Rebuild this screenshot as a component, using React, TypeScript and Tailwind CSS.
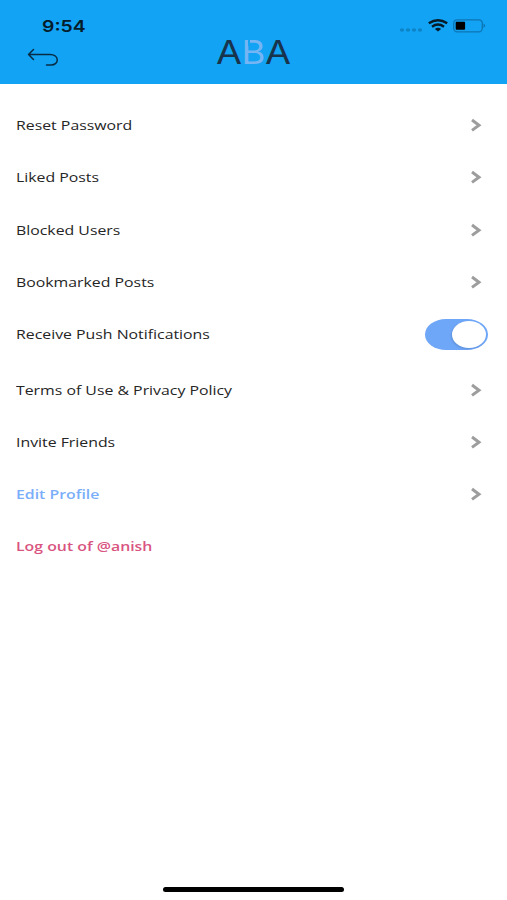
const rows = [
  { label: 'Reset Password', box: 'h-[52px]' },
  { label: 'Liked Posts', box: 'h-[52px]' },
  { label: 'Blocked Users', box: 'h-[53px]' },
  { label: 'Bookmarked Posts', box: 'h-[52px]' },
  { label: 'Receive Push Notifications', box: 'h-[52px] mb-1', toggle: true },
  { label: 'Terms of Use & Privacy Policy', box: 'h-[52px]' },
  { label: 'Invite Friends', box: 'h-[52px]' },
  { label: 'Edit Profile', box: 'h-[52px]', tone: 'text-[#7aaefa] font-semibold' },
  { label: 'Log out of @anish', box: 'h-[51px]', tone: 'text-[#d9547f] font-semibold', plain: true },
];

function Chevron() {
  return (
    <svg className="mr-[25px] mb-[2px] h-[14px] w-[12px]" viewBox="0 0 12 14" fill="none" stroke="#9d9d9d" strokeWidth="3">
      <path d="M2 2 9 7.2 2 12.4" />
    </svg>
  );
}

function Toggle() {
  return (
    <button aria-label="Receive Push Notifications" className="mr-[19px] mb-[2px] flex h-[31px] w-[63px] items-center justify-end rounded-[21px/15.5px] bg-[#6ea6f8] pr-[2px]">
      <span className="h-[27px] w-[34px] rounded-[50%] bg-white shadow-[-1px_1px_2px_rgba(0,0,0,0.12)]" />
    </button>
  );
}

export default function App() {
  return (
    <main className="flex h-[900px] w-[507px] flex-col bg-white font-['Open_Sans',sans-serif]">
      <header className="h-[84px] bg-[#12a3f5]">
        <div className="flex h-[38px] items-start justify-between pl-[42px] pr-[20px]">
          <span className="mt-[16px] origin-left scale-x-[1.21] font-['Inter',sans-serif] text-[16px] leading-5 font-semibold text-[#061c2b]">9:54</span>
          <svg className="mt-[18px] h-[16px] w-[88px]" viewBox="0 0 88 16" fill="none">
            <g fill="#0d82c4">
              <ellipse cx="3" cy="12" rx="2.1" ry="1.7" />
              <ellipse cx="9" cy="12" rx="2.1" ry="1.7" />
              <ellipse cx="15" cy="12" rx="2.1" ry="1.7" />
              <ellipse cx="21" cy="12" rx="2.1" ry="1.7" />
            </g>
            <g stroke="#061a28" strokeWidth="2.4">
              <path d="M29.8 5.3Q39 -.8 48.2 5.3" />
              <path d="M33 8.8Q39 4.4 45 8.8" />
            </g>
            <path d="M35.9 10.9Q39 8.8 42.1 10.9L39 13.6Z" fill="#061a28" />
            <rect x="54.7" y="1.8" width="28.6" height="12" rx="3.5" stroke="#0c76b3" strokeWidth="1.3" />
            <rect x="56.7" y="3.8" width="9.4" height="8" rx="1" fill="#000" />
            <path d="M84.5 5.6Q88 7.8 84.5 10Z" fill="#0c76b3" />
          </svg>
        </div>
        <div className="grid h-[46px] grid-cols-3 items-start">
          <button aria-label="Back" className="ml-[26px] mt-[9px] w-[34px]">
            <svg className="h-[21px] w-[34px]" viewBox="0 0 34 21" fill="none" stroke="#082c44" strokeWidth="1.5" strokeLinecap="round" strokeLinejoin="round">
              <path d="M7.5 2.5 2.5 7.5 7.5 12.5M2.5 7.5H24C33.5 7.5 33.5 18 25 18H20.5" />
            </svg>
          </button>
          <div className="relative flex justify-center pt-[2px] font-['Inter',sans-serif] text-[32px] leading-[26px] text-[#18344c]">
            <span className="scale-x-[1.18]">A</span>
            <span className="mx-[3px] scale-x-[1.14] text-[#75b5f3]">B</span>
            <span className="scale-x-[1.18]">A</span>
            <span className="absolute top-[2px] left-[79px] h-[6px] w-[2px] bg-[#12a3f5]" />
          </div>
        </div>
      </header>
      <ul className="grow pt-4">
        {rows.map((r) => (
          <li key={r.label} className={`flex items-center justify-between pl-[15.6px] ${r.box}`}>
            <span className={`origin-left scale-x-[1.218] text-[13px] whitespace-nowrap ${r.tone ?? 'text-[#252525]'}`}>{r.label}</span>
            {r.toggle ? <Toggle /> : r.plain ? null : <Chevron />}
          </li>
        ))}
      </ul>
      <div className="mx-auto mb-[8px] h-[5px] w-[181px] rounded-full bg-black" />
    </main>
  );
}
